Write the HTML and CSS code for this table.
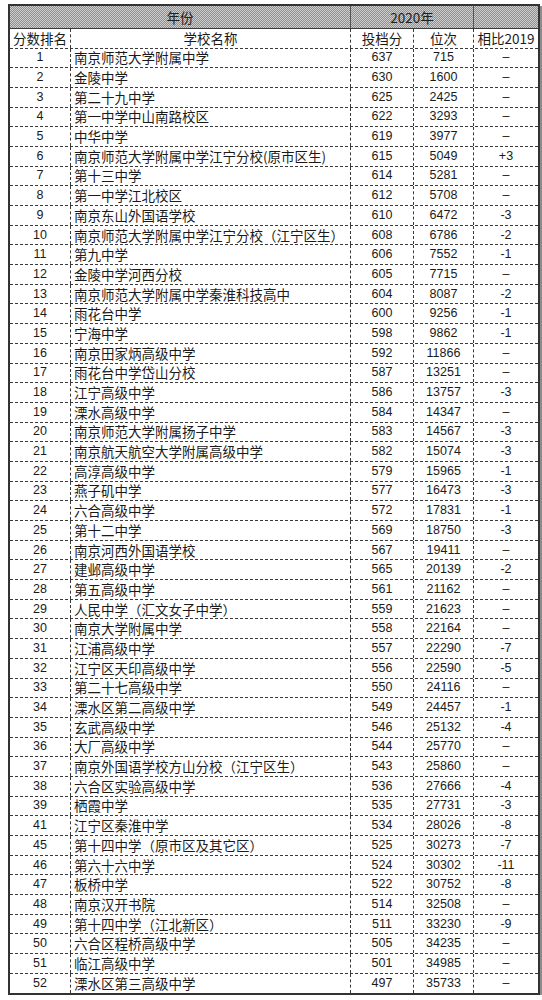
FILE: index.html
```html
<!DOCTYPE html>
<html lang="zh-CN">
<head>
<meta charset="utf-8">
<title>2020年 分数排名</title>
<link rel="stylesheet" href="styles.css">
</head>
<body>
<div class="frame" role="table">
<div class="row h1" role="row"><div class="cell span2">年份</div><div class="cell span2">2020年</div><div class="cell"></div></div>
<div class="row h2" role="row"><div class="cell">分数排名</div><div class="cell">学校名称</div><div class="cell">投档分</div><div class="cell">位次</div><div class="cell">相比2019</div></div>
<div class="row" role="row"><div class="cell num">1</div><div class="cell name">南京师范大学附属中学</div><div class="cell num">637</div><div class="cell num">715</div><div class="cell num">–</div></div>
<div class="row" role="row"><div class="cell num">2</div><div class="cell name">金陵中学</div><div class="cell num">630</div><div class="cell num">1600</div><div class="cell num">–</div></div>
<div class="row" role="row"><div class="cell num">3</div><div class="cell name">第二十九中学</div><div class="cell num">625</div><div class="cell num">2425</div><div class="cell num">–</div></div>
<div class="row" role="row"><div class="cell num">4</div><div class="cell name">第一中学中山南路校区</div><div class="cell num">622</div><div class="cell num">3293</div><div class="cell num">–</div></div>
<div class="row" role="row"><div class="cell num">5</div><div class="cell name">中华中学</div><div class="cell num">619</div><div class="cell num">3977</div><div class="cell num">–</div></div>
<div class="row" role="row"><div class="cell num">6</div><div class="cell name">南京师范大学附属中学江宁分校(原市区生)</div><div class="cell num">615</div><div class="cell num">5049</div><div class="cell num">+3</div></div>
<div class="row" role="row"><div class="cell num">7</div><div class="cell name">第十三中学</div><div class="cell num">614</div><div class="cell num">5281</div><div class="cell num">–</div></div>
<div class="row" role="row"><div class="cell num">8</div><div class="cell name">第一中学江北校区</div><div class="cell num">612</div><div class="cell num">5708</div><div class="cell num">–</div></div>
<div class="row" role="row"><div class="cell num">9</div><div class="cell name">南京东山外国语学校</div><div class="cell num">610</div><div class="cell num">6472</div><div class="cell num">-3</div></div>
<div class="row" role="row"><div class="cell num">10</div><div class="cell name">南京师范大学附属中学江宁分校（江宁区生）</div><div class="cell num">608</div><div class="cell num">6786</div><div class="cell num">-2</div></div>
<div class="row" role="row"><div class="cell num">11</div><div class="cell name">第九中学</div><div class="cell num">606</div><div class="cell num">7552</div><div class="cell num">-1</div></div>
<div class="row" role="row"><div class="cell num">12</div><div class="cell name">金陵中学河西分校</div><div class="cell num">605</div><div class="cell num">7715</div><div class="cell num">–</div></div>
<div class="row" role="row"><div class="cell num">13</div><div class="cell name">南京师范大学附属中学秦淮科技高中</div><div class="cell num">604</div><div class="cell num">8087</div><div class="cell num">-2</div></div>
<div class="row" role="row"><div class="cell num">14</div><div class="cell name">雨花台中学</div><div class="cell num">600</div><div class="cell num">9256</div><div class="cell num">-1</div></div>
<div class="row" role="row"><div class="cell num">15</div><div class="cell name">宁海中学</div><div class="cell num">598</div><div class="cell num">9862</div><div class="cell num">-1</div></div>
<div class="row" role="row"><div class="cell num">16</div><div class="cell name">南京田家炳高级中学</div><div class="cell num">592</div><div class="cell num">11866</div><div class="cell num">–</div></div>
<div class="row" role="row"><div class="cell num">17</div><div class="cell name">雨花台中学岱山分校</div><div class="cell num">587</div><div class="cell num">13251</div><div class="cell num">–</div></div>
<div class="row" role="row"><div class="cell num">18</div><div class="cell name">江宁高级中学</div><div class="cell num">586</div><div class="cell num">13757</div><div class="cell num">-3</div></div>
<div class="row" role="row"><div class="cell num">19</div><div class="cell name">溧水高级中学</div><div class="cell num">584</div><div class="cell num">14347</div><div class="cell num">–</div></div>
<div class="row" role="row"><div class="cell num">20</div><div class="cell name">南京师范大学附属扬子中学</div><div class="cell num">583</div><div class="cell num">14567</div><div class="cell num">-3</div></div>
<div class="row" role="row"><div class="cell num">21</div><div class="cell name">南京航天航空大学附属高级中学</div><div class="cell num">582</div><div class="cell num">15074</div><div class="cell num">-3</div></div>
<div class="row" role="row"><div class="cell num">22</div><div class="cell name">高淳高级中学</div><div class="cell num">579</div><div class="cell num">15965</div><div class="cell num">-1</div></div>
<div class="row" role="row"><div class="cell num">23</div><div class="cell name">燕子矶中学</div><div class="cell num">577</div><div class="cell num">16473</div><div class="cell num">-3</div></div>
<div class="row" role="row"><div class="cell num">24</div><div class="cell name">六合高级中学</div><div class="cell num">572</div><div class="cell num">17831</div><div class="cell num">-1</div></div>
<div class="row" role="row"><div class="cell num">25</div><div class="cell name">第十二中学</div><div class="cell num">569</div><div class="cell num">18750</div><div class="cell num">-3</div></div>
<div class="row" role="row"><div class="cell num">26</div><div class="cell name">南京河西外国语学校</div><div class="cell num">567</div><div class="cell num">19411</div><div class="cell num">–</div></div>
<div class="row" role="row"><div class="cell num">27</div><div class="cell name">建邺高级中学</div><div class="cell num">565</div><div class="cell num">20139</div><div class="cell num">-2</div></div>
<div class="row" role="row"><div class="cell num">28</div><div class="cell name">第五高级中学</div><div class="cell num">561</div><div class="cell num">21162</div><div class="cell num">–</div></div>
<div class="row" role="row"><div class="cell num">29</div><div class="cell name">人民中学（汇文女子中学）</div><div class="cell num">559</div><div class="cell num">21623</div><div class="cell num">–</div></div>
<div class="row" role="row"><div class="cell num">30</div><div class="cell name">南京大学附属中学</div><div class="cell num">558</div><div class="cell num">22164</div><div class="cell num">–</div></div>
<div class="row" role="row"><div class="cell num">31</div><div class="cell name">江浦高级中学</div><div class="cell num">557</div><div class="cell num">22290</div><div class="cell num">-7</div></div>
<div class="row" role="row"><div class="cell num">32</div><div class="cell name">江宁区天印高级中学</div><div class="cell num">556</div><div class="cell num">22590</div><div class="cell num">-5</div></div>
<div class="row" role="row"><div class="cell num">33</div><div class="cell name">第二十七高级中学</div><div class="cell num">550</div><div class="cell num">24116</div><div class="cell num">–</div></div>
<div class="row" role="row"><div class="cell num">34</div><div class="cell name">溧水区第二高级中学</div><div class="cell num">549</div><div class="cell num">24457</div><div class="cell num">-1</div></div>
<div class="row" role="row"><div class="cell num">35</div><div class="cell name">玄武高级中学</div><div class="cell num">546</div><div class="cell num">25132</div><div class="cell num">-4</div></div>
<div class="row" role="row"><div class="cell num">36</div><div class="cell name">大厂高级中学</div><div class="cell num">544</div><div class="cell num">25770</div><div class="cell num">–</div></div>
<div class="row" role="row"><div class="cell num">37</div><div class="cell name">南京外国语学校方山分校（江宁区生）</div><div class="cell num">543</div><div class="cell num">25860</div><div class="cell num">–</div></div>
<div class="row" role="row"><div class="cell num">38</div><div class="cell name">六合区实验高级中学</div><div class="cell num">536</div><div class="cell num">27666</div><div class="cell num">-4</div></div>
<div class="row" role="row"><div class="cell num">39</div><div class="cell name">栖霞中学</div><div class="cell num">535</div><div class="cell num">27731</div><div class="cell num">-3</div></div>
<div class="row" role="row"><div class="cell num">41</div><div class="cell name">江宁区秦淮中学</div><div class="cell num">534</div><div class="cell num">28026</div><div class="cell num">-8</div></div>
<div class="row" role="row"><div class="cell num">45</div><div class="cell name">第十四中学（原市区及其它区）</div><div class="cell num">525</div><div class="cell num">30273</div><div class="cell num">-7</div></div>
<div class="row" role="row"><div class="cell num">46</div><div class="cell name">第六十六中学</div><div class="cell num">524</div><div class="cell num">30302</div><div class="cell num">-11</div></div>
<div class="row" role="row"><div class="cell num">47</div><div class="cell name">板桥中学</div><div class="cell num">522</div><div class="cell num">30752</div><div class="cell num">-8</div></div>
<div class="row" role="row"><div class="cell num">48</div><div class="cell name">南京汉开书院</div><div class="cell num">514</div><div class="cell num">32508</div><div class="cell num">–</div></div>
<div class="row" role="row"><div class="cell num">49</div><div class="cell name">第十四中学（江北新区）</div><div class="cell num">511</div><div class="cell num">33230</div><div class="cell num">-9</div></div>
<div class="row" role="row"><div class="cell num">50</div><div class="cell name">六合区程桥高级中学</div><div class="cell num">505</div><div class="cell num">34235</div><div class="cell num">–</div></div>
<div class="row" role="row"><div class="cell num">51</div><div class="cell name">临江高级中学</div><div class="cell num">501</div><div class="cell num">34985</div><div class="cell num">–</div></div>
<div class="row" role="row"><div class="cell num">52</div><div class="cell name">溧水区第三高级中学</div><div class="cell num">497</div><div class="cell num">35733</div><div class="cell num">–</div></div>
</div>
</body>
</html>
```
FILE: styles.css
```css
html, body {
  margin: 0;
  background: #ffffff;
}
body {
  padding: 4px 0 0 8px;
  font-family: "Noto Sans CJK SC", "Liberation Sans", sans-serif;
  color: #1a1a1a;
}
.frame {
  width: 528px;
  border: 2px solid #333333;
  box-shadow: 2px 2px 0 #8c8c8c;
}
.row {
  display: grid;
  grid-template-columns: 61px 280px 63px 60px 64px;
  height: 19.7px;
  box-sizing: border-box;
  border-bottom: 1px dashed #3a3a3a;
}
.row:last-child { border-bottom: none; height: 18.7px; }
.cell {
  display: flex;
  align-items: center;
  justify-content: center;
  min-width: 0;
  white-space: nowrap;
  font-size: 13.5px;
  line-height: 15px;
  border-right: 1px dashed #3a3a3a;
}
.cell:last-child { border-right: none; }
.span2 { grid-column: span 2; }
.h1 {
  height: 23px;
  border-bottom: 1px solid #3a3a3a;
  background: repeating-conic-gradient(#8e8e8e 0 25%, #cfcfcf 0 50%) 0 0 / 2px 2px;
  color: #222222;
}
.h1 .cell { border-right: 1px solid #555555; }
.h1 .cell:last-child { border-right: none; }
.h2 { height: 19.5px; }
.name {
  justify-content: flex-start;
  padding-left: 3px;
}
.num {
  font-family: "Liberation Sans", "Noto Sans CJK SC", sans-serif;
  font-size: 12.5px;
}
```
